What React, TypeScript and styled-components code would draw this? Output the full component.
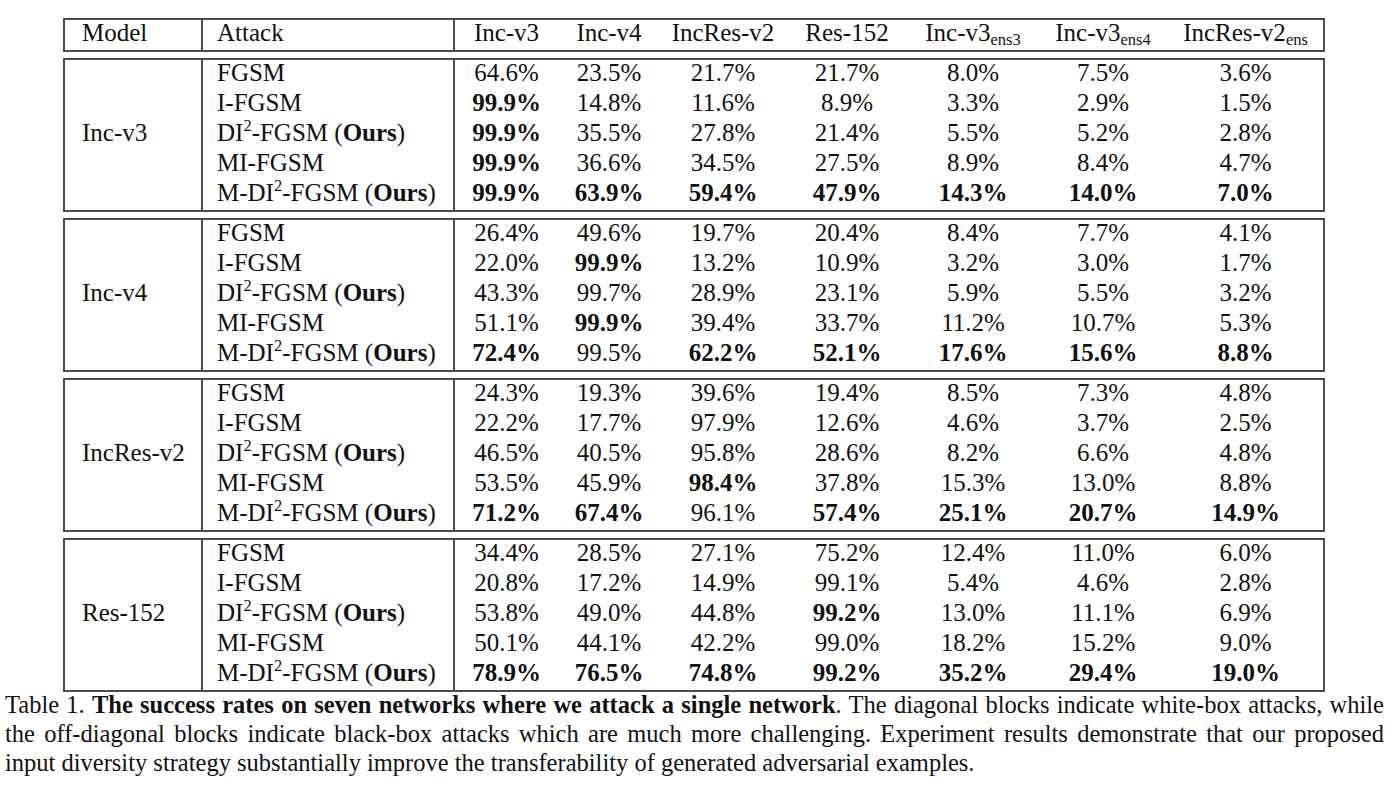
import React from "react";
import styled, { createGlobalStyle } from "styled-components";

const GlobalStyle = createGlobalStyle`
  html, body { margin: 0; padding: 0; background: #ffffff; }
  body {
    font-family: "Liberation Serif", "Times New Roman", "DejaVu Serif", serif;
    color: #111111;
  }
`;

const LINE = "#4d4d4d";
const COLS = "138px 252px 103px 102px 126px 122px 130px 130px 155px";

const Page = styled.div`
  width: 1392px;
  height: 791px;
  padding-top: 18px;
  box-sizing: border-box;
  overflow: hidden;
`;

const TableWrap = styled.div`
  display: flex;
  flex-direction: column;
  gap: 6px;
  margin-left: 63px;
  width: 1262px;
`;

const Box = styled.div`
  display: grid;
  grid-template-columns: ${COLS};
  grid-auto-rows: 30px;
  border: 2px solid ${LINE};
  font-size: 25px;
  line-height: 26px;
`;

const ModelCell = styled.div<{ $span: number }>`
  grid-row: span ${(p) => p.$span};
  border-right: 2px solid ${LINE};
  padding-left: 17px;
  padding-bottom: 4px;
  display: flex;
  align-items: center;
  white-space: nowrap;
`;

const AttackCell = styled.div`
  border-right: 2px solid ${LINE};
  padding-left: 14px;
  white-space: nowrap;
`;

const ValueCell = styled.div<{ $bold?: boolean }>`
  text-align: center;
  white-space: nowrap;
  font-weight: ${(p) => (p.$bold ? 700 : 400)};
`;

const Sup = styled.sup`
  font-size: 0.66em;
  line-height: 0;
  vertical-align: 0.62em;
`;

const Sub = styled.sub`
  font-size: 0.66em;
  line-height: 0;
  vertical-align: -0.22em;
`;

const Strong = styled.b`
  font-weight: 700;
`;

const Caption = styled.div`
  margin: -2px 8px 0 5px;
  font-size: 24.5px;
  line-height: 29px;
`;

const CaptionLine = styled.div<{ $last?: boolean }>`
  text-align: ${(p) => (p.$last ? "left" : "justify")};
  text-align-last: ${(p) => (p.$last ? "left" : "justify")};
  white-space: nowrap;
`;

type Block = { model: string; rows: string[][] };

const blocks: Block[] = [
  {
    model: "Inc-v3",
    rows: [
      ["64.6", "23.5", "21.7", "21.7", "8.0", "7.5", "3.6"],
      ["*99.9", "14.8", "11.6", "8.9", "3.3", "2.9", "1.5"],
      ["*99.9", "35.5", "27.8", "21.4", "5.5", "5.2", "2.8"],
      ["*99.9", "36.6", "34.5", "27.5", "8.9", "8.4", "4.7"],
      ["*99.9", "*63.9", "*59.4", "*47.9", "*14.3", "*14.0", "*7.0"],
    ],
  },
  {
    model: "Inc-v4",
    rows: [
      ["26.4", "49.6", "19.7", "20.4", "8.4", "7.7", "4.1"],
      ["22.0", "*99.9", "13.2", "10.9", "3.2", "3.0", "1.7"],
      ["43.3", "99.7", "28.9", "23.1", "5.9", "5.5", "3.2"],
      ["51.1", "*99.9", "39.4", "33.7", "11.2", "10.7", "5.3"],
      ["*72.4", "99.5", "*62.2", "*52.1", "*17.6", "*15.6", "*8.8"],
    ],
  },
  {
    model: "IncRes-v2",
    rows: [
      ["24.3", "19.3", "39.6", "19.4", "8.5", "7.3", "4.8"],
      ["22.2", "17.7", "97.9", "12.6", "4.6", "3.7", "2.5"],
      ["46.5", "40.5", "95.8", "28.6", "8.2", "6.6", "4.8"],
      ["53.5", "45.9", "*98.4", "37.8", "15.3", "13.0", "8.8"],
      ["*71.2", "*67.4", "96.1", "*57.4", "*25.1", "*20.7", "*14.9"],
    ],
  },
  {
    model: "Res-152",
    rows: [
      ["34.4", "28.5", "27.1", "75.2", "12.4", "11.0", "6.0"],
      ["20.8", "17.2", "14.9", "99.1", "5.4", "4.6", "2.8"],
      ["53.8", "49.0", "44.8", "*99.2", "13.0", "11.1", "6.9"],
      ["50.1", "44.1", "42.2", "99.0", "18.2", "15.2", "9.0"],
      ["*78.9", "*76.5", "*74.8", "*99.2", "*35.2", "*29.4", "*19.0"],
    ],
  },
];

const attackLabels: React.ReactNode[] = [
  "FGSM",
  "I-FGSM",
  <>
    DI<Sup>2</Sup>-FGSM (<Strong>Ours</Strong>)
  </>,
  "MI-FGSM",
  <>
    M-DI<Sup>2</Sup>-FGSM (<Strong>Ours</Strong>)
  </>,
];

const headers: React.ReactNode[] = [
  "Inc-v3",
  "Inc-v4",
  "IncRes-v2",
  "Res-152",
  <>
    Inc-v3<Sub>ens3</Sub>
  </>,
  <>
    Inc-v3<Sub>ens4</Sub>
  </>,
  <>
    IncRes-v2<Sub>ens</Sub>
  </>,
];

export default function App() {
  return (
    <Page>
      <GlobalStyle />
      <TableWrap>
        <Box>
          <ModelCell $span={1}>Model</ModelCell>
          <AttackCell>Attack</AttackCell>
          {headers.map((h, i) => (
            <ValueCell key={i}>{h}</ValueCell>
          ))}
        </Box>
        {blocks.map((b) => (
          <Box key={b.model}>
            <ModelCell $span={5}>{b.model}</ModelCell>
            {b.rows.map((row, ri) => (
              <React.Fragment key={ri}>
                <AttackCell>{attackLabels[ri]}</AttackCell>
                {row.map((v, ci) => {
                  const bold = v.startsWith("*");
                  return (
                    <ValueCell key={ci} $bold={bold}>
                      {(bold ? v.slice(1) : v) + "%"}
                    </ValueCell>
                  );
                })}
              </React.Fragment>
            ))}
          </Box>
        ))}
      </TableWrap>
      <Caption>
        <CaptionLine>
          Table 1. <Strong>The success rates on seven networks where we attack a single network</Strong>. The
          diagonal blocks indicate white-box attacks, while
        </CaptionLine>
        <CaptionLine>
          the off-diagonal blocks indicate black-box attacks which are much more challenging. Experiment results
          demonstrate that our proposed
        </CaptionLine>
        <CaptionLine $last>
          input diversity strategy substantially improve the transferability of generated adversarial examples.
        </CaptionLine>
      </Caption>
    </Page>
  );
}
